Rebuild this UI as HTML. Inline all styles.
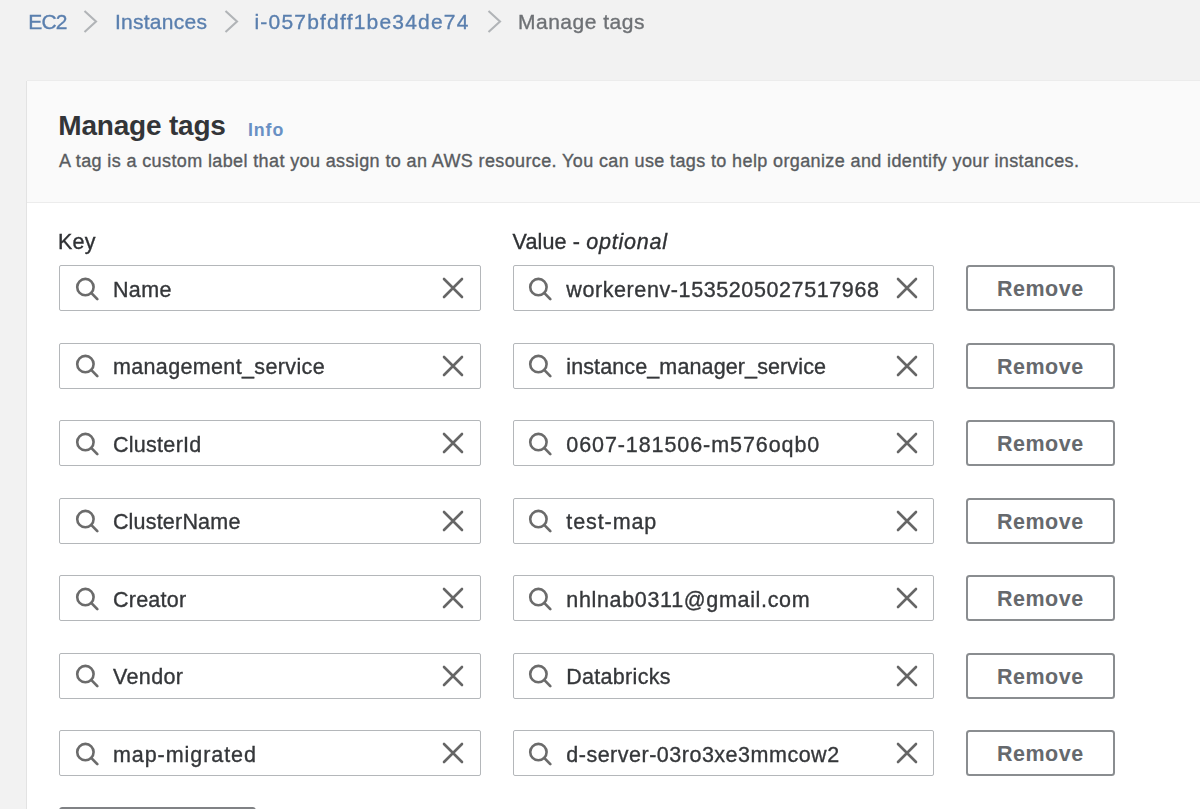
<!DOCTYPE html>
<html><head><meta charset="utf-8"><style>
html,body{margin:0;padding:0;}
body{width:1200px;height:809px;overflow:hidden;position:relative;background:#f2f2f2;font-family:"Liberation Sans",sans-serif;}
#wrap{position:absolute;left:0;top:0;width:1200px;height:809px;filter:blur(0.45px);}
.desc,.inp .t,.lbl,.bc{-webkit-text-stroke:0.35px currentColor;}
.a{position:absolute;white-space:nowrap;}
.bc{position:absolute;top:8px;font-size:21px;line-height:28px;color:#5a7fae;white-space:nowrap;}
.bc.cur{color:#6e7175;}
.chev{position:absolute;top:10px;}
.card{position:absolute;left:27px;top:81px;width:1200px;height:800px;background:#fff;box-shadow:-1px 0 0 #e3e3e3, 0 -1px 0 #ececec;}
.hdr{position:absolute;left:0;top:0;right:0;height:121px;background:#fafafa;border-bottom:1px solid #ececec;}
.title{position:absolute;left:58.3px;top:109px;font-size:28px;line-height:34px;font-weight:700;color:#333538;letter-spacing:-0.2px;white-space:nowrap;}
.info{position:absolute;left:248px;top:119px;letter-spacing:0.9px;font-size:17.8px;line-height:23px;font-weight:700;color:#6990c4;white-space:nowrap;}
.desc{position:absolute;left:59px;top:149px;font-size:18px;line-height:24px;color:#595c60;letter-spacing:0.38px;white-space:nowrap;}
.lbl{position:absolute;top:229.5px;font-size:21.5px;line-height:24px;color:#2f3134;white-space:nowrap;}
.inp{position:absolute;width:419.5px;height:44px;border:1px solid #b4b7ba;border-radius:2px;background:#fff;}
.inp .si{position:absolute;left:14.7px;top:10.8px;}
.inp .xi{position:absolute;right:15.4px;top:11px;}
.inp .t{position:absolute;left:52.6px;top:10.5px;font-size:21.5px;line-height:26px;color:#35373a;white-space:nowrap;}
.btn{position:absolute;width:144.6px;height:42px;border:2px solid #8a8d90;border-radius:3.5px;background:#fff;text-align:center;font-size:21.5px;line-height:44px;font-weight:700;color:#66696d;letter-spacing:0.5px;}
.add{position:absolute;left:59px;top:807px;width:193px;height:40px;border:2px solid #808285;border-radius:3.5px;background:#fff;}
</style></head><body><div id="wrap">
<div class="bc" style="left:28.3px;letter-spacing:-0.9px">EC2</div>
<svg class="chev" style="left:83px" width="15" height="24" viewBox="0 0 15 24"><path d="M1.5 1 L13 11.5 L1.5 22" fill="none" stroke="#b1b4b7" stroke-width="2.1"/></svg>
<div class="bc" style="left:115px;letter-spacing:0.25px">Instances</div>
<svg class="chev" style="left:223.7px" width="15" height="24" viewBox="0 0 15 24"><path d="M1.5 1 L13 11.5 L1.5 22" fill="none" stroke="#b1b4b7" stroke-width="2.1"/></svg>
<div class="bc" style="left:254.5px;letter-spacing:1.2px">i-057bfdff1be34de74</div>
<svg class="chev" style="left:487.3px" width="15" height="24" viewBox="0 0 15 24"><path d="M1.5 1 L13 11.5 L1.5 22" fill="none" stroke="#b1b4b7" stroke-width="2.1"/></svg>
<div class="bc cur" style="left:518px;letter-spacing:0.5px">Manage tags</div>
<div class="card"><div class="hdr"></div></div>
<div class="title">Manage tags</div>
<div class="info">Info</div>
<div class="desc">A tag is a custom label that you assign to an AWS resource. You can use tags to help organize and identify your instances.</div>
<div class="lbl" style="left:58px;letter-spacing:0.2px">Key</div>
<div class="lbl" style="left:512.5px;letter-spacing:0.15px">Value - <i style="letter-spacing:0.8px">optional</i></div>
<div class="inp" style="left:59.3px;top:265.0px"><svg class="si" width="26" height="26" viewBox="0 0 26 26"><circle cx="10.4" cy="10.1" r="8.2" fill="none" stroke="#6b6b6b" stroke-width="2.6"/><line x1="16.2" y1="15.9" x2="22.3" y2="22.1" stroke="#6b6b6b" stroke-width="2.7" stroke-linecap="round"/></svg><span class="t" style="letter-spacing:0.4px">Name</span><svg class="xi" width="22" height="22" viewBox="0 0 22 22"><path d="M2 2 L20 20 M20 2 L2 20" stroke="#666" stroke-width="2.6" fill="none" stroke-linecap="round"/></svg></div>
<div class="inp" style="left:512.75px;top:265.0px"><svg class="si" width="26" height="26" viewBox="0 0 26 26"><circle cx="10.4" cy="10.1" r="8.2" fill="none" stroke="#6b6b6b" stroke-width="2.6"/><line x1="16.2" y1="15.9" x2="22.3" y2="22.1" stroke="#6b6b6b" stroke-width="2.7" stroke-linecap="round"/></svg><span class="t" style="left:52.5px;letter-spacing:0.6px">workerenv-1535205027517968</span><svg class="xi" width="22" height="22" viewBox="0 0 22 22"><path d="M2 2 L20 20 M20 2 L2 20" stroke="#666" stroke-width="2.6" fill="none" stroke-linecap="round"/></svg></div>
<div class="btn" style="left:966px;top:265.0px">Remove</div>
<div class="inp" style="left:59.3px;top:342.5px"><svg class="si" width="26" height="26" viewBox="0 0 26 26"><circle cx="10.4" cy="10.1" r="8.2" fill="none" stroke="#6b6b6b" stroke-width="2.6"/><line x1="16.2" y1="15.9" x2="22.3" y2="22.1" stroke="#6b6b6b" stroke-width="2.7" stroke-linecap="round"/></svg><span class="t" style="letter-spacing:0.364px">management_service</span><svg class="xi" width="22" height="22" viewBox="0 0 22 22"><path d="M2 2 L20 20 M20 2 L2 20" stroke="#666" stroke-width="2.6" fill="none" stroke-linecap="round"/></svg></div>
<div class="inp" style="left:512.75px;top:342.5px"><svg class="si" width="26" height="26" viewBox="0 0 26 26"><circle cx="10.4" cy="10.1" r="8.2" fill="none" stroke="#6b6b6b" stroke-width="2.6"/><line x1="16.2" y1="15.9" x2="22.3" y2="22.1" stroke="#6b6b6b" stroke-width="2.7" stroke-linecap="round"/></svg><span class="t" style="left:52.5px;letter-spacing:0.12px">instance_manager_service</span><svg class="xi" width="22" height="22" viewBox="0 0 22 22"><path d="M2 2 L20 20 M20 2 L2 20" stroke="#666" stroke-width="2.6" fill="none" stroke-linecap="round"/></svg></div>
<div class="btn" style="left:966px;top:342.5px">Remove</div>
<div class="inp" style="left:59.3px;top:420.0px"><svg class="si" width="26" height="26" viewBox="0 0 26 26"><circle cx="10.4" cy="10.1" r="8.2" fill="none" stroke="#6b6b6b" stroke-width="2.6"/><line x1="16.2" y1="15.9" x2="22.3" y2="22.1" stroke="#6b6b6b" stroke-width="2.7" stroke-linecap="round"/></svg><span class="t" style="letter-spacing:0.3px">ClusterId</span><svg class="xi" width="22" height="22" viewBox="0 0 22 22"><path d="M2 2 L20 20 M20 2 L2 20" stroke="#666" stroke-width="2.6" fill="none" stroke-linecap="round"/></svg></div>
<div class="inp" style="left:512.75px;top:420.0px"><svg class="si" width="26" height="26" viewBox="0 0 26 26"><circle cx="10.4" cy="10.1" r="8.2" fill="none" stroke="#6b6b6b" stroke-width="2.6"/><line x1="16.2" y1="15.9" x2="22.3" y2="22.1" stroke="#6b6b6b" stroke-width="2.7" stroke-linecap="round"/></svg><span class="t" style="left:52.5px;letter-spacing:0.922px">0607-181506-m576oqb0</span><svg class="xi" width="22" height="22" viewBox="0 0 22 22"><path d="M2 2 L20 20 M20 2 L2 20" stroke="#666" stroke-width="2.6" fill="none" stroke-linecap="round"/></svg></div>
<div class="btn" style="left:966px;top:420.0px">Remove</div>
<div class="inp" style="left:59.3px;top:497.5px"><svg class="si" width="26" height="26" viewBox="0 0 26 26"><circle cx="10.4" cy="10.1" r="8.2" fill="none" stroke="#6b6b6b" stroke-width="2.6"/><line x1="16.2" y1="15.9" x2="22.3" y2="22.1" stroke="#6b6b6b" stroke-width="2.7" stroke-linecap="round"/></svg><span class="t" style="letter-spacing:0.2px">ClusterName</span><svg class="xi" width="22" height="22" viewBox="0 0 22 22"><path d="M2 2 L20 20 M20 2 L2 20" stroke="#666" stroke-width="2.6" fill="none" stroke-linecap="round"/></svg></div>
<div class="inp" style="left:512.75px;top:497.5px"><svg class="si" width="26" height="26" viewBox="0 0 26 26"><circle cx="10.4" cy="10.1" r="8.2" fill="none" stroke="#6b6b6b" stroke-width="2.6"/><line x1="16.2" y1="15.9" x2="22.3" y2="22.1" stroke="#6b6b6b" stroke-width="2.7" stroke-linecap="round"/></svg><span class="t" style="left:52.5px;letter-spacing:0.916px">test-map</span><svg class="xi" width="22" height="22" viewBox="0 0 22 22"><path d="M2 2 L20 20 M20 2 L2 20" stroke="#666" stroke-width="2.6" fill="none" stroke-linecap="round"/></svg></div>
<div class="btn" style="left:966px;top:497.5px">Remove</div>
<div class="inp" style="left:59.3px;top:575.0px"><svg class="si" width="26" height="26" viewBox="0 0 26 26"><circle cx="10.4" cy="10.1" r="8.2" fill="none" stroke="#6b6b6b" stroke-width="2.6"/><line x1="16.2" y1="15.9" x2="22.3" y2="22.1" stroke="#6b6b6b" stroke-width="2.7" stroke-linecap="round"/></svg><span class="t" style="letter-spacing:0.28px">Creator</span><svg class="xi" width="22" height="22" viewBox="0 0 22 22"><path d="M2 2 L20 20 M20 2 L2 20" stroke="#666" stroke-width="2.6" fill="none" stroke-linecap="round"/></svg></div>
<div class="inp" style="left:512.75px;top:575.0px"><svg class="si" width="26" height="26" viewBox="0 0 26 26"><circle cx="10.4" cy="10.1" r="8.2" fill="none" stroke="#6b6b6b" stroke-width="2.6"/><line x1="16.2" y1="15.9" x2="22.3" y2="22.1" stroke="#6b6b6b" stroke-width="2.7" stroke-linecap="round"/></svg><span class="t" style="left:52.5px;letter-spacing:0.674px">nhlnab0311@gmail.com</span><svg class="xi" width="22" height="22" viewBox="0 0 22 22"><path d="M2 2 L20 20 M20 2 L2 20" stroke="#666" stroke-width="2.6" fill="none" stroke-linecap="round"/></svg></div>
<div class="btn" style="left:966px;top:575.0px">Remove</div>
<div class="inp" style="left:59.3px;top:652.5px"><svg class="si" width="26" height="26" viewBox="0 0 26 26"><circle cx="10.4" cy="10.1" r="8.2" fill="none" stroke="#6b6b6b" stroke-width="2.6"/><line x1="16.2" y1="15.9" x2="22.3" y2="22.1" stroke="#6b6b6b" stroke-width="2.7" stroke-linecap="round"/></svg><span class="t" style="letter-spacing:0.4px">Vendor</span><svg class="xi" width="22" height="22" viewBox="0 0 22 22"><path d="M2 2 L20 20 M20 2 L2 20" stroke="#666" stroke-width="2.6" fill="none" stroke-linecap="round"/></svg></div>
<div class="inp" style="left:512.75px;top:652.5px"><svg class="si" width="26" height="26" viewBox="0 0 26 26"><circle cx="10.4" cy="10.1" r="8.2" fill="none" stroke="#6b6b6b" stroke-width="2.6"/><line x1="16.2" y1="15.9" x2="22.3" y2="22.1" stroke="#6b6b6b" stroke-width="2.7" stroke-linecap="round"/></svg><span class="t" style="left:52.5px;letter-spacing:0.296px">Databricks</span><svg class="xi" width="22" height="22" viewBox="0 0 22 22"><path d="M2 2 L20 20 M20 2 L2 20" stroke="#666" stroke-width="2.6" fill="none" stroke-linecap="round"/></svg></div>
<div class="btn" style="left:966px;top:652.5px">Remove</div>
<div class="inp" style="left:59.3px;top:730.0px"><svg class="si" width="26" height="26" viewBox="0 0 26 26"><circle cx="10.4" cy="10.1" r="8.2" fill="none" stroke="#6b6b6b" stroke-width="2.6"/><line x1="16.2" y1="15.9" x2="22.3" y2="22.1" stroke="#6b6b6b" stroke-width="2.7" stroke-linecap="round"/></svg><span class="t" style="letter-spacing:0.95px">map-migrated</span><svg class="xi" width="22" height="22" viewBox="0 0 22 22"><path d="M2 2 L20 20 M20 2 L2 20" stroke="#666" stroke-width="2.6" fill="none" stroke-linecap="round"/></svg></div>
<div class="inp" style="left:512.75px;top:730.0px"><svg class="si" width="26" height="26" viewBox="0 0 26 26"><circle cx="10.4" cy="10.1" r="8.2" fill="none" stroke="#6b6b6b" stroke-width="2.6"/><line x1="16.2" y1="15.9" x2="22.3" y2="22.1" stroke="#6b6b6b" stroke-width="2.7" stroke-linecap="round"/></svg><span class="t" style="left:52.5px;letter-spacing:0.508px">d-server-03ro3xe3mmcow2</span><svg class="xi" width="22" height="22" viewBox="0 0 22 22"><path d="M2 2 L20 20 M20 2 L2 20" stroke="#666" stroke-width="2.6" fill="none" stroke-linecap="round"/></svg></div>
<div class="btn" style="left:966px;top:730.0px">Remove</div>
<div class="add"></div>
</div></body></html>
